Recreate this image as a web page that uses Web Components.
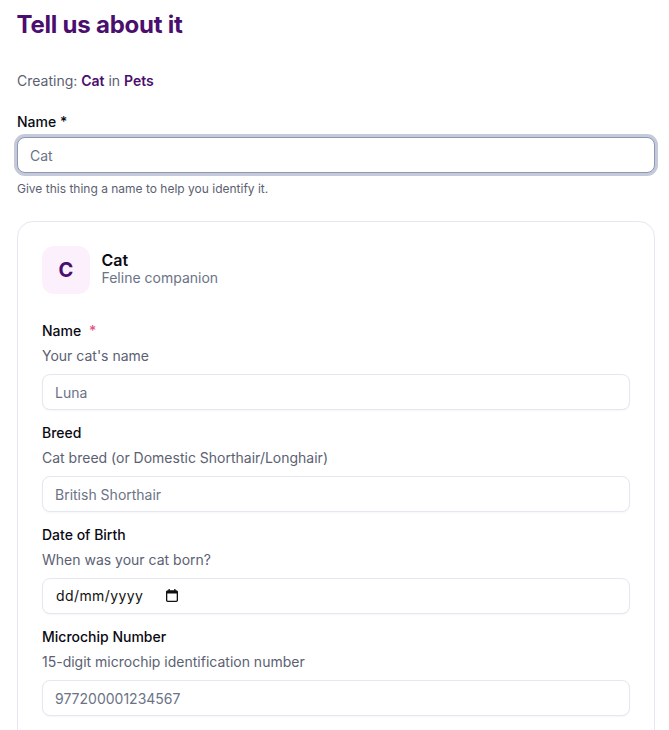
<!DOCTYPE html>
<html lang="en">
<head>
<meta charset="utf-8">
<title>Tell us about it</title>
<style>
html,body{margin:0;padding:0;background:#fff;overflow:hidden;height:730px}
body{font-family:Inter,"Liberation Sans",sans-serif}
</style>
</head>
<body>
<tell-page></tell-page>
<script>
const FONT='Inter,"Liberation Sans",sans-serif';
class FormField extends HTMLElement{
  constructor(){
    super();
    const s=this.attachShadow({mode:'open'});
    const req=this.hasAttribute('required');
    const isDate=this.getAttribute('type')==='date';
    const control=isDate
      ?`<div class="box date"><span class="dt">dd/mm/yyyy</span><svg width="12" height="13" viewBox="0 0 12 13" aria-hidden="true"><path fill="#111" fill-rule="evenodd" d="M2.500 0h1.300v1.200h4.400V0h1.300v1.200h.8c.9 0 1.700.8 1.700 1.700v8.400c0 .9-.8 1.700-1.700 1.700H1.700C.8 13 0 12.200 0 11.300V2.900C0 2 .8 1.200 1.700 1.200h.8V0zM1.300 4.400v6.900c0 .2.200.4.400.4h8.600c.2 0 .4-.2.400-.4V4.400H1.300z"/></svg></div>`
      :`<input class="box" type="text" placeholder="${this.getAttribute('placeholder')||''}">`;
    s.innerHTML=`<style>
      :host{display:flex;flex-direction:column;font-family:${FONT}}
      .label{font-size:14px;font-weight:500;line-height:20px;color:#0a0a14;height:20px}
      .req{color:#e5557f;margin-left:4px}
      .desc{font-size:14px;line-height:20px;color:#5b6172;margin-top:5px}
      .box{box-sizing:border-box;height:36px;width:100%;margin:8px 0 0;border:1px solid #e4e6f2;border-radius:8px;background:#fff;padding:0 12px;font:14px ${FONT};color:#111;outline:none;box-shadow:0 1px 2px rgba(20,20,60,.04)}
      .box::placeholder{color:#6b7386;opacity:1}
      .date{display:flex;align-items:center;gap:23px;padding:0 12px 2px 13px}
      .dt{color:#111;letter-spacing:.4px}
    </style>
    <div class="label">${this.getAttribute('label')}${req?' <span class="req">*</span>':''}</div>
    <div class="desc">${this.getAttribute('desc')}</div>
    ${control}`;
  }
}
customElements.define('form-field',FormField);

class TypeCard extends HTMLElement{
  constructor(){
    super();
    this.attachShadow({mode:'open'}).innerHTML=`<style>
      :host{display:block;box-sizing:border-box;border:1px solid #e5e7f2;border-radius:16px;padding:24px;height:600px;font-family:${FONT}}
      .head{display:flex;gap:11.5px;align-items:center;margin-bottom:27px}
      .icon{width:48px;height:48px;border-radius:12px;background:#fcf0fd;color:#4a0e6e;display:flex;align-items:center;justify-content:center;font-size:20px;font-weight:700}
      .text{padding-bottom:3px}
      .title{font-size:16px;font-weight:600;line-height:18px;color:#0a0a14}
      .sub{font-size:14px;line-height:18px;color:#6b7386}
      .fields{display:flex;flex-direction:column;gap:13px}
    </style>
    <div class="head"><div class="icon">C</div><div class="text"><div class="title">Cat</div><div class="sub">Feline companion</div></div></div>
    <div class="fields"><slot></slot></div>`;
  }
}
customElements.define('type-card',TypeCard);

class TellPage extends HTMLElement{
  constructor(){
    super();
    this.attachShadow({mode:'open'}).innerHTML=`<style>
      :host{display:block;padding:10px 14px 0 17px;font-family:${FONT}}
      h1{margin:0 0 0 -.5px;font-size:24px;line-height:30px;font-weight:700;color:#4a0e6e;letter-spacing:-.22px}
      .creating{margin:31px 0 0;font-size:14px;line-height:20px;color:#5b6172}
      .creating b{font-weight:600;color:#4a0e6e}
      label{display:block;margin-top:21px;font-size:14px;line-height:20px;font-weight:500;color:#0a0a14}
      input{display:block;box-sizing:border-box;width:100%;height:36px;margin-top:5px;border:1px solid #8e97b4;border-radius:8px;padding:1px 12px 0;font:14px ${FONT};outline:none;box-shadow:0 0 0 3px #c5cadb;background:#fff}
      input::placeholder{color:#6b7386;opacity:1}
      .hint{margin:8px 0 0;font-size:12px;line-height:16px;color:#5b6172}
      type-card{margin-top:24px}
    </style>
    <h1>Tell us about it</h1>
    <p class="creating">Creating: <b>Cat</b> in <b>Pets</b></p>
    <label>Name *</label>
    <input type="text" placeholder="Cat">
    <p class="hint">Give this thing a name to help you identify it.</p>
    <type-card>
      <form-field label="Name" required desc="Your cat's name" placeholder="Luna"></form-field>
      <form-field label="Breed" desc="Cat breed (or Domestic Shorthair/Longhair)" placeholder="British Shorthair"></form-field>
      <form-field label="Date of Birth" desc="When was your cat born?" type="date"></form-field>
      <form-field label="Microchip Number" desc="15-digit microchip identification number" placeholder="977200001234567"></form-field>
    </type-card>`;
  }
}
customElements.define('tell-page',TellPage);
</script>
</body>
</html>
